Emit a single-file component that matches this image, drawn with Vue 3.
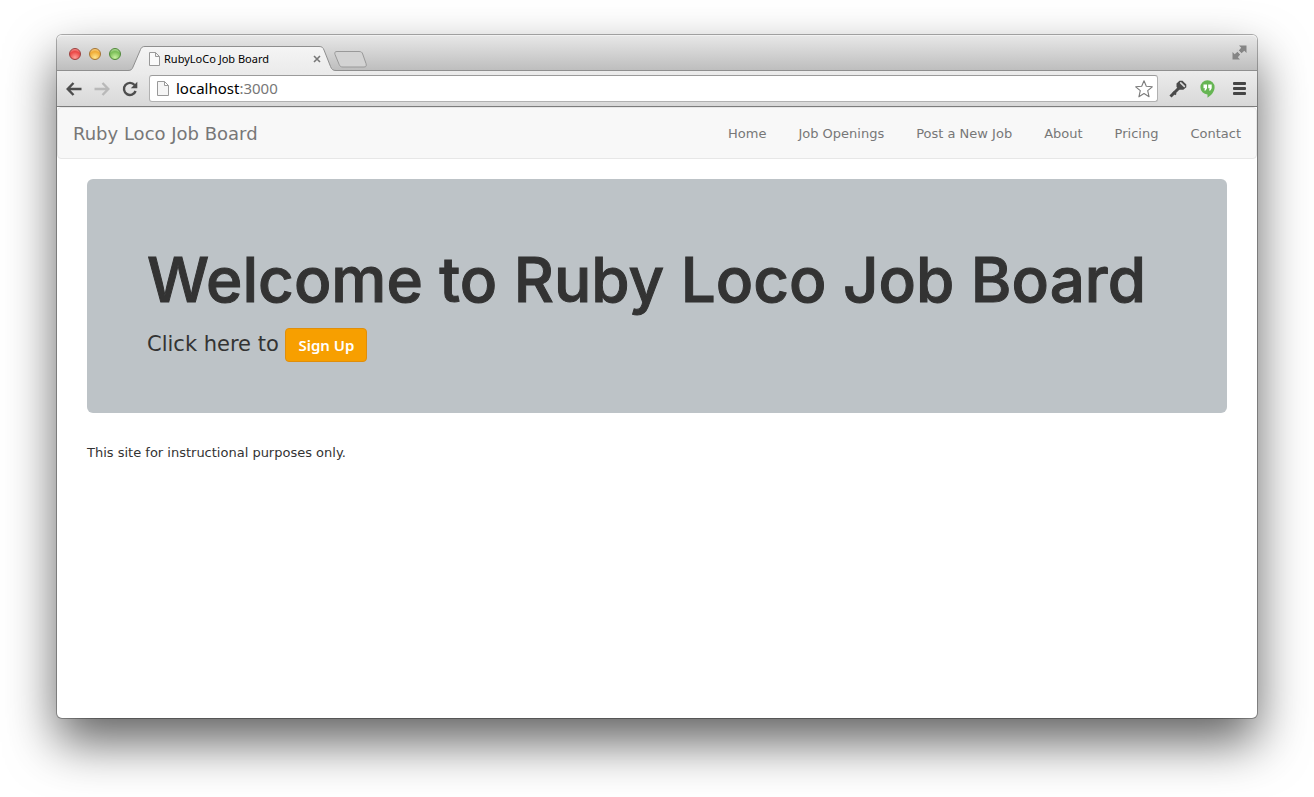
<script setup>
const links = ['Home', 'Job Openings', 'Post a New Job', 'About', 'Pricing', 'Contact']
</script>

<template>
  <div class="desktop">
    <div class="window">
      <header class="tabstrip">
        <div class="lights">
          <button class="light red" aria-label="Close window"></button>
          <button class="light amber" aria-label="Minimise window"></button>
          <button class="light green" aria-label="Zoom window"></button>
        </div>
        <div class="tab">
          <svg class="tab-shape" width="212" height="26" viewBox="0 0 212 26" aria-hidden="true">
            <defs>
              <linearGradient id="tabfill" x1="0" y1="0" x2="0" y2="1">
                <stop offset="0" stop-color="#f5f5f5" />
                <stop offset="1" stop-color="#ebebeb" />
              </linearGradient>
            </defs>
            <path d="M0 26V24.500C3 24.500 4 23.500 5 21L12.500 3.500C13.400 1.300 14.500 .5 17 .5H191C194 .5 195 1.500 196 4L202.500 20.500C203.700 23.500 205 24.500 208 24.500H212V26Z" fill="url(#tabfill)" />
            <path d="M0 24.500C3 24.500 4 23.500 5 21L12.500 3.500C13.400 1.300 14.500 .5 17 .5H191C194 .5 195 1.500 196 4L202.500 20.500C203.700 23.500 205 24.500 208 24.500H212" fill="none" stroke="#8f8f8f" />
          </svg>
          <svg class="page-icon" width="11" height="14" viewBox="0 0 11 14" aria-hidden="true">
            <path d="M.5 .5H6.500L10.500 4.500V13.500H.5ZM6.500 .5V4.500H10.500" fill="#fafafa" stroke="#999" />
          </svg>
          <span class="tab-title">RubyLoCo Job Board</span>
          <button class="tab-close" aria-label="Close tab">
            <svg width="8" height="8" viewBox="0 0 8 8"><path d="M1 1L7 7M7 1L1 7" stroke="#777" stroke-width="1.600" /></svg>
          </button>
        </div>
        <button class="new-tab" aria-label="New tab">
          <svg width="33" height="17" viewBox="0 0 33 17">
            <path d="M3 .5H25C27 .5 28 1 28.700 3L32 12.500C32.800 15 32 16 30 16H9C7 16 6 15.500 5.200 13.500L1 3.500C.3 1.500 1 .5 3 .5Z" fill="#d3d3d3" stroke="#999" />
          </svg>
        </button>
        <button class="fullscreen" aria-label="Full screen">
          <svg width="15" height="15" viewBox="0 0 15 15" fill="#858585">
            <path d="M7 .5H14.500V8L12.300 5.800L9.500 8.200L6.800 5.500L9.200 2.700Z" />
            <path d="M8 14.500H.5V7L2.700 9.200L5.500 6.800L8.200 9.500L5.800 12.300Z" />
            <path d="M4.800 4.800L10.200 10.200" stroke="#d0d0d0" stroke-width="1.400" />
          </svg>
        </button>
      </header>

      <div class="toolbar">
        <button class="tool back" aria-label="Back">
          <svg width="16" height="14" viewBox="0 0 16 14" fill="none" stroke="#4d4d4d" stroke-width="2.400"><path d="M7.500 1L1.700 7L7.500 13M2 7H15.500" /></svg>
        </button>
        <button class="tool forward" aria-label="Forward">
          <svg width="16" height="14" viewBox="0 0 16 14" fill="none" stroke="#b9b9b9" stroke-width="2.400"><path d="M8.500 1L14.300 7L8.500 13M14 7H.5" /></svg>
        </button>
        <button class="tool reload" aria-label="Reload">
          <svg width="16" height="16" viewBox="0 0 16 16"><path d="M12.600 4.100A6 6 0 1 0 13.600 10" fill="none" stroke="#4d4d4d" stroke-width="2.400" /><path d="M15.300 .8V7.300H8.800Z" fill="#4d4d4d" /></svg>
        </button>
        <div class="omnibox">
          <svg class="page-icon" width="12" height="15" viewBox="0 0 12 15" aria-hidden="true">
            <path d="M.5 .5H7.500L11.500 4.500V14.500H.5ZM7.500 .5V4.500H11.500" fill="#f5f5f5" stroke="#999" />
          </svg>
          <button class="address" aria-label="Address">localhost<span class="port">:3000</span></button>
          <button class="tool star" aria-label="Bookmark this page">
            <svg width="18" height="18" viewBox="0 0 18 18"><path d="M9 .8L11.300 6.300L17.300 6.800L12.700 10.700L14.100 16.800L9 13.500L3.900 16.800L5.300 10.700L.7 6.800L6.700 6.300Z" fill="#fff" stroke="#7b7b7b" stroke-width="1.100" stroke-linejoin="round" /></svg>
          </button>
        </div>
        <button class="tool key" aria-label="Passwords">
          <svg width="18" height="18" viewBox="0 0 18 18">
            <path d="M10 8L1.500 16.500" stroke="#4a4a4a" stroke-width="3" />
            <path d="M4 12L7 14.500" stroke="#4a4a4a" stroke-width="2" />
            <path d="M7.500 3.500L10.500 .8H13.500L17.300 4.600V7.200L14.300 9.800H10.500L7.500 7Z" fill="#4a4a4a" />
            <path d="M11.700 2.800L15.300 6.300" stroke="#d9d9d9" stroke-width="1.700" stroke-linecap="round" />
          </svg>
        </button>
        <button class="tool hangouts" aria-label="Hangouts">
          <svg width="15" height="18" viewBox="0 0 15 18">
            <path d="M7.500 .2A7 7 0 0 0 7.500 14.400V17.700C11 15.800 14.600 11.800 14.600 7.300A7.100 7.100 0 0 0 7.500 .2Z" fill="#66b553" />
            <path d="M3.500 4.500H7V8.300L5.700 10.500H4.300L5 8.200H3.500ZM8.200 4.500H11.700V8.300L10.400 10.500H9L9.700 8.200H8.200Z" fill="#fff" />
          </svg>
        </button>
        <button class="tool menu" aria-label="Menu">
          <svg width="13" height="13" viewBox="0 0 13 13"><path d="M1 1.500H12M1 6.500H12M1 11.500H12" stroke="#454545" stroke-width="2.800" stroke-linecap="round" /></svg>
        </button>
      </div>

      <div class="page">
        <nav class="navbar">
          <a class="brand" href="#">Ruby Loco Job Board</a>
          <ul class="links">
            <li v-for="link in links" :key="link"><a href="#">{{ link }}</a></li>
          </ul>
        </nav>
        <main class="content">
          <section class="jumbotron">
            <h1>Welcome to Ruby Loco Job Board</h1>
            <p>Click here to <a class="signup" href="#">Sign Up</a></p>
          </section>
          <footer>This site for instructional purposes only.</footer>
        </main>
      </div>
    </div>
  </div>
</template>

<style>
body {
  background: #fff;
}
</style>

<style scoped>
.desktop {
  box-sizing: border-box;
  min-height: 100vh;
  padding: 35px 57px 79px;
  display: flex;
  overflow: hidden;
  font-family: "DejaVu Sans", Verdana, sans-serif;
}
.window {
  flex: 1;
  min-width: 0;
  display: flex;
  flex-direction: column;
  border-radius: 5px;
  background: #fff;
  box-shadow: 0 0 0 1px rgba(0, 0, 0, 0.3), 0 24px 50px rgba(0, 0, 0, 0.62);
}
button {
  border: 0;
  padding: 0;
  background: none;
  font: inherit;
}
svg {
  display: block;
}
.tabstrip {
  height: 35px;
  display: flex;
  align-items: flex-end;
  border-bottom: 1px solid #8f8f8f;
  border-radius: 5px 5px 0 0;
  background: linear-gradient(#e8e8e8, #bebebe);
  box-shadow: inset 0 1px #f2f2f2;
}
.lights {
  align-self: center;
  display: flex;
  gap: 8px;
  margin: 2px 0 0 12px;
}
.light {
  box-sizing: border-box;
  width: 12px;
  height: 12px;
  border-radius: 50%;
  border: 1px solid;
}
.red {
  border-color: #9c3f3d;
  background: radial-gradient(circle at 50% 85%, #ff9f98, #ea4644 60%, #f9b5b3);
}
.amber {
  border-color: #a57432;
  background: radial-gradient(circle at 50% 85%, #ffe58e, #f0ab35 60%, #fae0ae);
}
.green {
  border-color: #4f8838;
  background: radial-gradient(circle at 50% 85%, #c9f2a0, #79bd56 60%, #d0ebc1);
}
.tab {
  position: relative;
  box-sizing: border-box;
  width: 208px;
  height: 25px;
  margin: 0 0 -1px 9px;
  padding: 0 17px 0 19px;
  display: flex;
  align-items: center;
}
.tab-shape {
  position: absolute;
  left: -2px;
  bottom: -1px;
}
.tab .page-icon,
.tab-title,
.tab-close {
  position: relative;
}
.tab-title {
  flex: 1;
  margin-left: 4px;
  font: 11px/16px "Noto Sans", sans-serif;
  color: #000;
  white-space: nowrap;
}
.new-tab {
  margin: 0 0 2px -4px;
}
.fullscreen {
  align-self: center;
  margin-left: auto;
  margin-right: 10px;
}
.toolbar {
  height: 35px;
  display: flex;
  align-items: center;
  border-bottom: 1px solid #7c7c7c;
  background: linear-gradient(#ececec, #d8d8d8);
}
.back {
  margin-left: 9px;
}
.forward {
  margin-left: 12px;
}
.reload {
  margin-left: 12px;
}
.omnibox {
  box-sizing: border-box;
  flex: 1;
  height: 27px;
  margin: 0 11px;
  padding: 0 4px 0 7px;
  display: flex;
  align-items: center;
  border: 1px solid #b1b1b1;
  border-top-color: #9b9b9b;
  border-radius: 3px;
  background: #fff;
}
.address {
  flex: 1;
  margin-left: 7px;
  padding-bottom: 2px;
  text-align: left;
  font: 15px/20px "Noto Sans", sans-serif;
  color: #000;
}
.port {
  color: #777;
}
.hangouts {
  margin-left: 13px;
}
.menu {
  margin: 0 11px 0 18px;
}
.page {
  flex: 1;
}
.navbar {
  box-sizing: border-box;
  min-height: 52px;
  padding: 2px 15px 0;
  display: flex;
  align-items: center;
  justify-content: space-between;
  border: 1px solid #e7e7e7;
  border-radius: 4px;
  background: #f8f8f8;
}
.navbar a {
  color: #777;
  text-decoration: none;
}
.brand {
  font-size: 18px;
  line-height: 20px;
}
.links {
  display: flex;
  gap: 32px;
  margin: 0;
  padding: 0;
  list-style: none;
  font-size: 13px;
  line-height: 20px;
}
.content {
  padding: 20px 30px;
  color: #333;
}
.jumbotron {
  box-sizing: border-box;
  padding: 66px 60px 51px;
  border-radius: 6px;
  background: #bdc3c7;
}
h1 {
  margin: 0;
  font: 500 62px/70px Inter, "Liberation Sans", Arial, sans-serif;
  white-space: nowrap;
  -webkit-text-stroke: 1px #333;
}
.jumbotron p {
  margin: 11px 0 0;
  font-size: 21px;
  line-height: 36px;
}
.signup {
  display: inline-block;
  padding: 6px 12px;
  border: 1px solid #e08e0b;
  border-radius: 4px;
  background: #f79f00;
  color: #fff;
  font: 600 15px/20px "Noto Sans", sans-serif;
  text-decoration: none;
  vertical-align: middle;
}
footer {
  margin-top: 30px;
  font-size: 13px;
  line-height: 20px;
}
</style>
